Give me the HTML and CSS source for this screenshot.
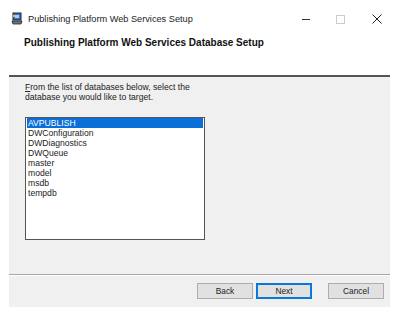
FILE: index.html
```html
<!DOCTYPE html>
<html>
<head>
<meta charset="utf-8">
<link rel="stylesheet" href="styles.css">
</head>
<body>
<div class="window">
  <div class="titlebar">
    <svg class="appicon" width="12" height="13" viewBox="0 0 12 13">
      <rect x="2" y="1" width="8" height="7" fill="#3a6fd0" stroke="#222" stroke-width="1"/>
      <rect x="4" y="3" width="4" height="3" fill="#9fd0ff"/>
      <path d="M1 9 L11 9 L10 12 L2 12 Z" fill="#777" stroke="#222" stroke-width="0.8"/>
      <circle cx="3" cy="4" r="1.2" fill="#e0c040"/>
    </svg>
    <span class="title">Publishing Platform Web Services Setup</span>
    <div class="controls">
      <span class="ctl min"></span>
      <span class="ctl max"></span>
      <svg class="ctl close" width="10" height="10" viewBox="0 0 10 10"><path d="M0.5 0.5 L9.5 9.5 M9.5 0.5 L0.5 9.5" stroke="#222" stroke-width="1"/></svg>
    </div>
  </div>
  <div class="header">
    <h1>Publishing Platform Web Services Database Setup</h1>
  </div>
  <div class="panel">
    <div class="content">
      <p class="prompt"><u>F</u>rom the list of databases below, select the<br>database you would like to target.</p>
      <ul class="listbox">
        <li class="selected">AVPUBLISH</li>
        <li>DWConfiguration</li>
        <li>DWDiagnostics</li>
        <li>DWQueue</li>
        <li>master</li>
        <li>model</li>
        <li>msdb</li>
        <li>tempdb</li>
      </ul>
    </div>
    <div class="footer">
      <button class="btn">Back</button>
      <button class="btn default">Next</button>
      <button class="btn cancel">Cancel</button>
    </div>
  </div>
</div>
</body>
</html>
```
FILE: styles.css
```css
* { box-sizing: border-box; }
html, body { margin: 0; padding: 0; background: #fff; }
body { width: 400px; height: 317px; overflow: hidden; font-family: "Liberation Sans", Arial, sans-serif; color: #111; }
.window { width: 400px; height: 317px; background: #fff; }
.titlebar { height: 38px; display: flex; align-items: center; padding-left: 11px; padding-top: 0; }
.appicon { margin-right: 5px; margin-top: -1px; }
.title { font-size: 9.2px; color: #222; letter-spacing: 0; }
.controls { margin-left: auto; display: flex; align-items: center; }
.ctl { display: block; }
.min { width: 8px; height: 1px; background: #333; margin-right: 26px; }
.max { width: 9px; height: 9px; border: 1px solid #ccc; margin-right: 27px; }
.close { margin-right: 18px; }
.header { height: 37px; padding-left: 24px; }
.header h1 { margin: 0; font-size: 10px; font-weight: bold; color: #111; line-height: 10px; padding-top: 0; }
.panel { margin: 0 10px 0 9px; height: 232px; background: #f0f0f0; border-top: 2px solid #555; display: flex; flex-direction: column; }
.content { padding: 5px 0 0 16px; flex: 1; }
.prompt { margin: 0; font-size: 8.6px; line-height: 10px; color: #222; }
.listbox { list-style: none; margin: 15px 0 0 0; padding: 0 1px; width: 180px; height: 123px; background: #fff; border: 1px solid #555; }
.listbox li { font-size: 8.6px; line-height: 10px; height: 10px; padding-left: 1px; color: #222; }
.listbox li.selected { background: #0a6fd8; color: #fff; }
.footer { height: 33px; border-top: 1px solid #a8a8a8; box-shadow: inset 0 1px 0 #fff; display: flex; align-items: flex-start; padding: 8px 0 0 188px; }
.btn { width: 56px; height: 16px; font-family: "Liberation Sans", Arial, sans-serif; font-size: 8.4px; color: #222; background: #e1e1e1; border: 1px solid #adadad; padding: 0; margin-right: 3px; }
.btn.default { border: 2px solid #0a78d7; }
.btn.cancel { margin-left: 13px; }
```
